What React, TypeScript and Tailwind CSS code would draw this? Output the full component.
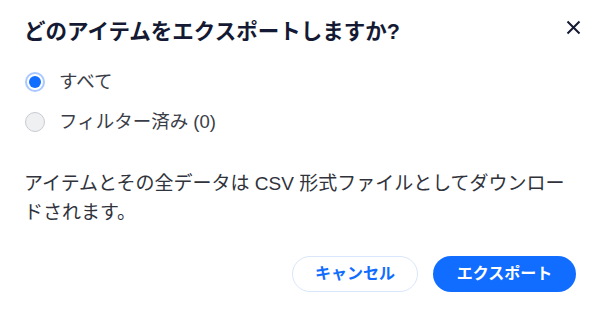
import React, { useState } from 'react'

const font = { fontFamily: '"Liberation Sans", "Noto Sans CJK JP", sans-serif' }

function Radio({ checked }: { checked: boolean }) {
  if (checked) {
    return (
      <span className="flex h-5 w-5 items-center justify-center rounded-full border-2 border-[#a8c8ff] bg-white">
        <span className="h-3 w-3 rounded-full bg-[#116dff]" />
      </span>
    )
  }
  return <span className="h-5 w-5 rounded-full border border-[#c8cbd0] bg-[#eff0f2]" />
}

export default function App() {
  const [choice, setChoice] = useState<'all' | 'filtered'>('all')
  const options = [
    { id: 'all' as const, label: 'すべて' },
    { id: 'filtered' as const, label: 'フィルター済み (0)' }
  ]

  return (
    <div className="h-[312px] w-[600px] bg-white px-6 pt-[18px]" style={font}>
      <div className="flex items-start justify-between">
        <h2 className="text-[21.5px] font-bold leading-[28px] text-[#141a33]">
          どのアイテムをエクスポートしますか?
        </h2>
        <button className="-mr-[7px] -mt-[1px] flex h-5 w-5 items-center justify-center text-[#141a33]">
          <svg width="15" height="15" viewBox="0 0 15 15" fill="none" stroke="currentColor" strokeWidth="2">
            <path d="M1.5 1.5l12 12M13.5 1.5l-12 12" />
          </svg>
        </button>
      </div>

      <div className="mt-4 flex flex-col">
        {options.map((o) => (
          <label
            key={o.id}
            className="flex h-10 cursor-pointer items-center gap-[14px] pl-[1px]"
            onClick={() => setChoice(o.id)}
          >
            <Radio checked={choice === o.id} />
            <span className="text-[18.5px] text-[#3a3d47]">{o.label}</span>
          </label>
        ))}
      </div>

      <p className="mt-[27px] text-[19px] leading-[29px] text-[#30333b]">
        アイテムとその全データは CSV 形式ファイルとしてダウンロードされます。
      </p>

      <div className="mt-[29px] flex justify-end gap-[15px]">
        <button className="h-9 w-[126px] rounded-full border border-[#d9e6fb] bg-white text-[16px] font-bold text-[#116dff]">
          キャンセル
        </button>
        <button className="h-9 w-[143px] rounded-full bg-[#116dff] text-[16px] font-bold text-white">
          エクスポート
        </button>
      </div>
    </div>
  )
}
